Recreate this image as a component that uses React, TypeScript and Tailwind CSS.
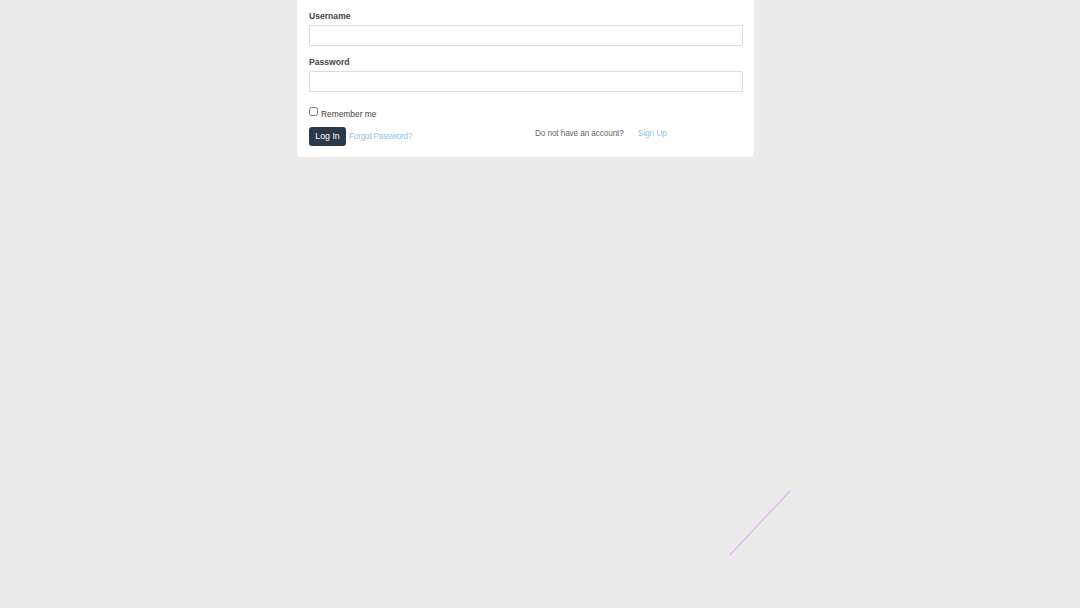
import React from 'react';

const App: React.FC = () => {
  return (
    <div className="relative min-h-[608px] w-full overflow-hidden bg-[#eaeaea] font-['Liberation_Sans',Arial,sans-serif]">
      {/* Login card */}
      <div className="ml-[297px] w-[457px] rounded-b-[3px] bg-white px-[12px] pb-[11px] pt-[10px] pr-[11px]">
        <form onSubmit={(e) => e.preventDefault()}>
          <label className="mb-[4px] block translate-y-[1px] text-[8.6px] font-bold leading-[11px] text-[#444]">Username</label>
          <input
            type="text"
            className="block h-[21px] w-full rounded-[1px] border border-[#dcdcdc] bg-white px-2 text-[9px] outline-none"
          />

          <label className="mb-[4px] mt-[10px] block translate-y-[1px] text-[8.6px] font-bold leading-[11px] text-[#444]">Password</label>
          <input
            type="password"
            className="block h-[21px] w-full rounded-[1px] border border-[#dcdcdc] bg-white px-2 text-[9px] outline-none"
          />

          <div className="mt-[14px] flex h-[13px] items-center">
            <input type="checkbox" className="m-0 h-[9px] w-[9px] -translate-y-[1px] accent-[#2c3e50]" />
            <span className="ml-[3px] translate-y-[1px] text-[8.4px] leading-[12px] text-[#444]">Remember me</span>
          </div>

          <div className="mt-[8px] grid grid-cols-2">
            <div className="flex items-center">
              <button
                type="submit"
                className="flex h-[19px] w-[37px] items-center justify-center rounded-[3px] bg-[#2b3a4a] text-[8.8px] text-white"
              >
                Log In
              </button>
              <a href="#" className="ml-[3px] translate-y-[1px] text-[8.2px] tracking-[-0.2px] text-[#8ec3ea]">
                Forgot Password?
              </a>
            </div>
            <div className="flex -translate-y-[2px] items-center pl-[9px] text-[8.2px]">
              <span className="tracking-[-0.1px] text-[#666]">Do not have an account?</span>
              <a href="#" className="ml-[14px] text-[#8ec3ea]">
                Sign Up
              </a>
            </div>
          </div>
        </form>
      </div>

      <svg className="pointer-events-none absolute left-[728px] top-[489px]" width="64" height="68" viewBox="0 0 64 68">
        <line x1="62" y1="2" x2="2" y2="66" stroke="#e3b0f0" strokeWidth="1.2" />
      </svg>
    </div>
  );
};

export default App;
